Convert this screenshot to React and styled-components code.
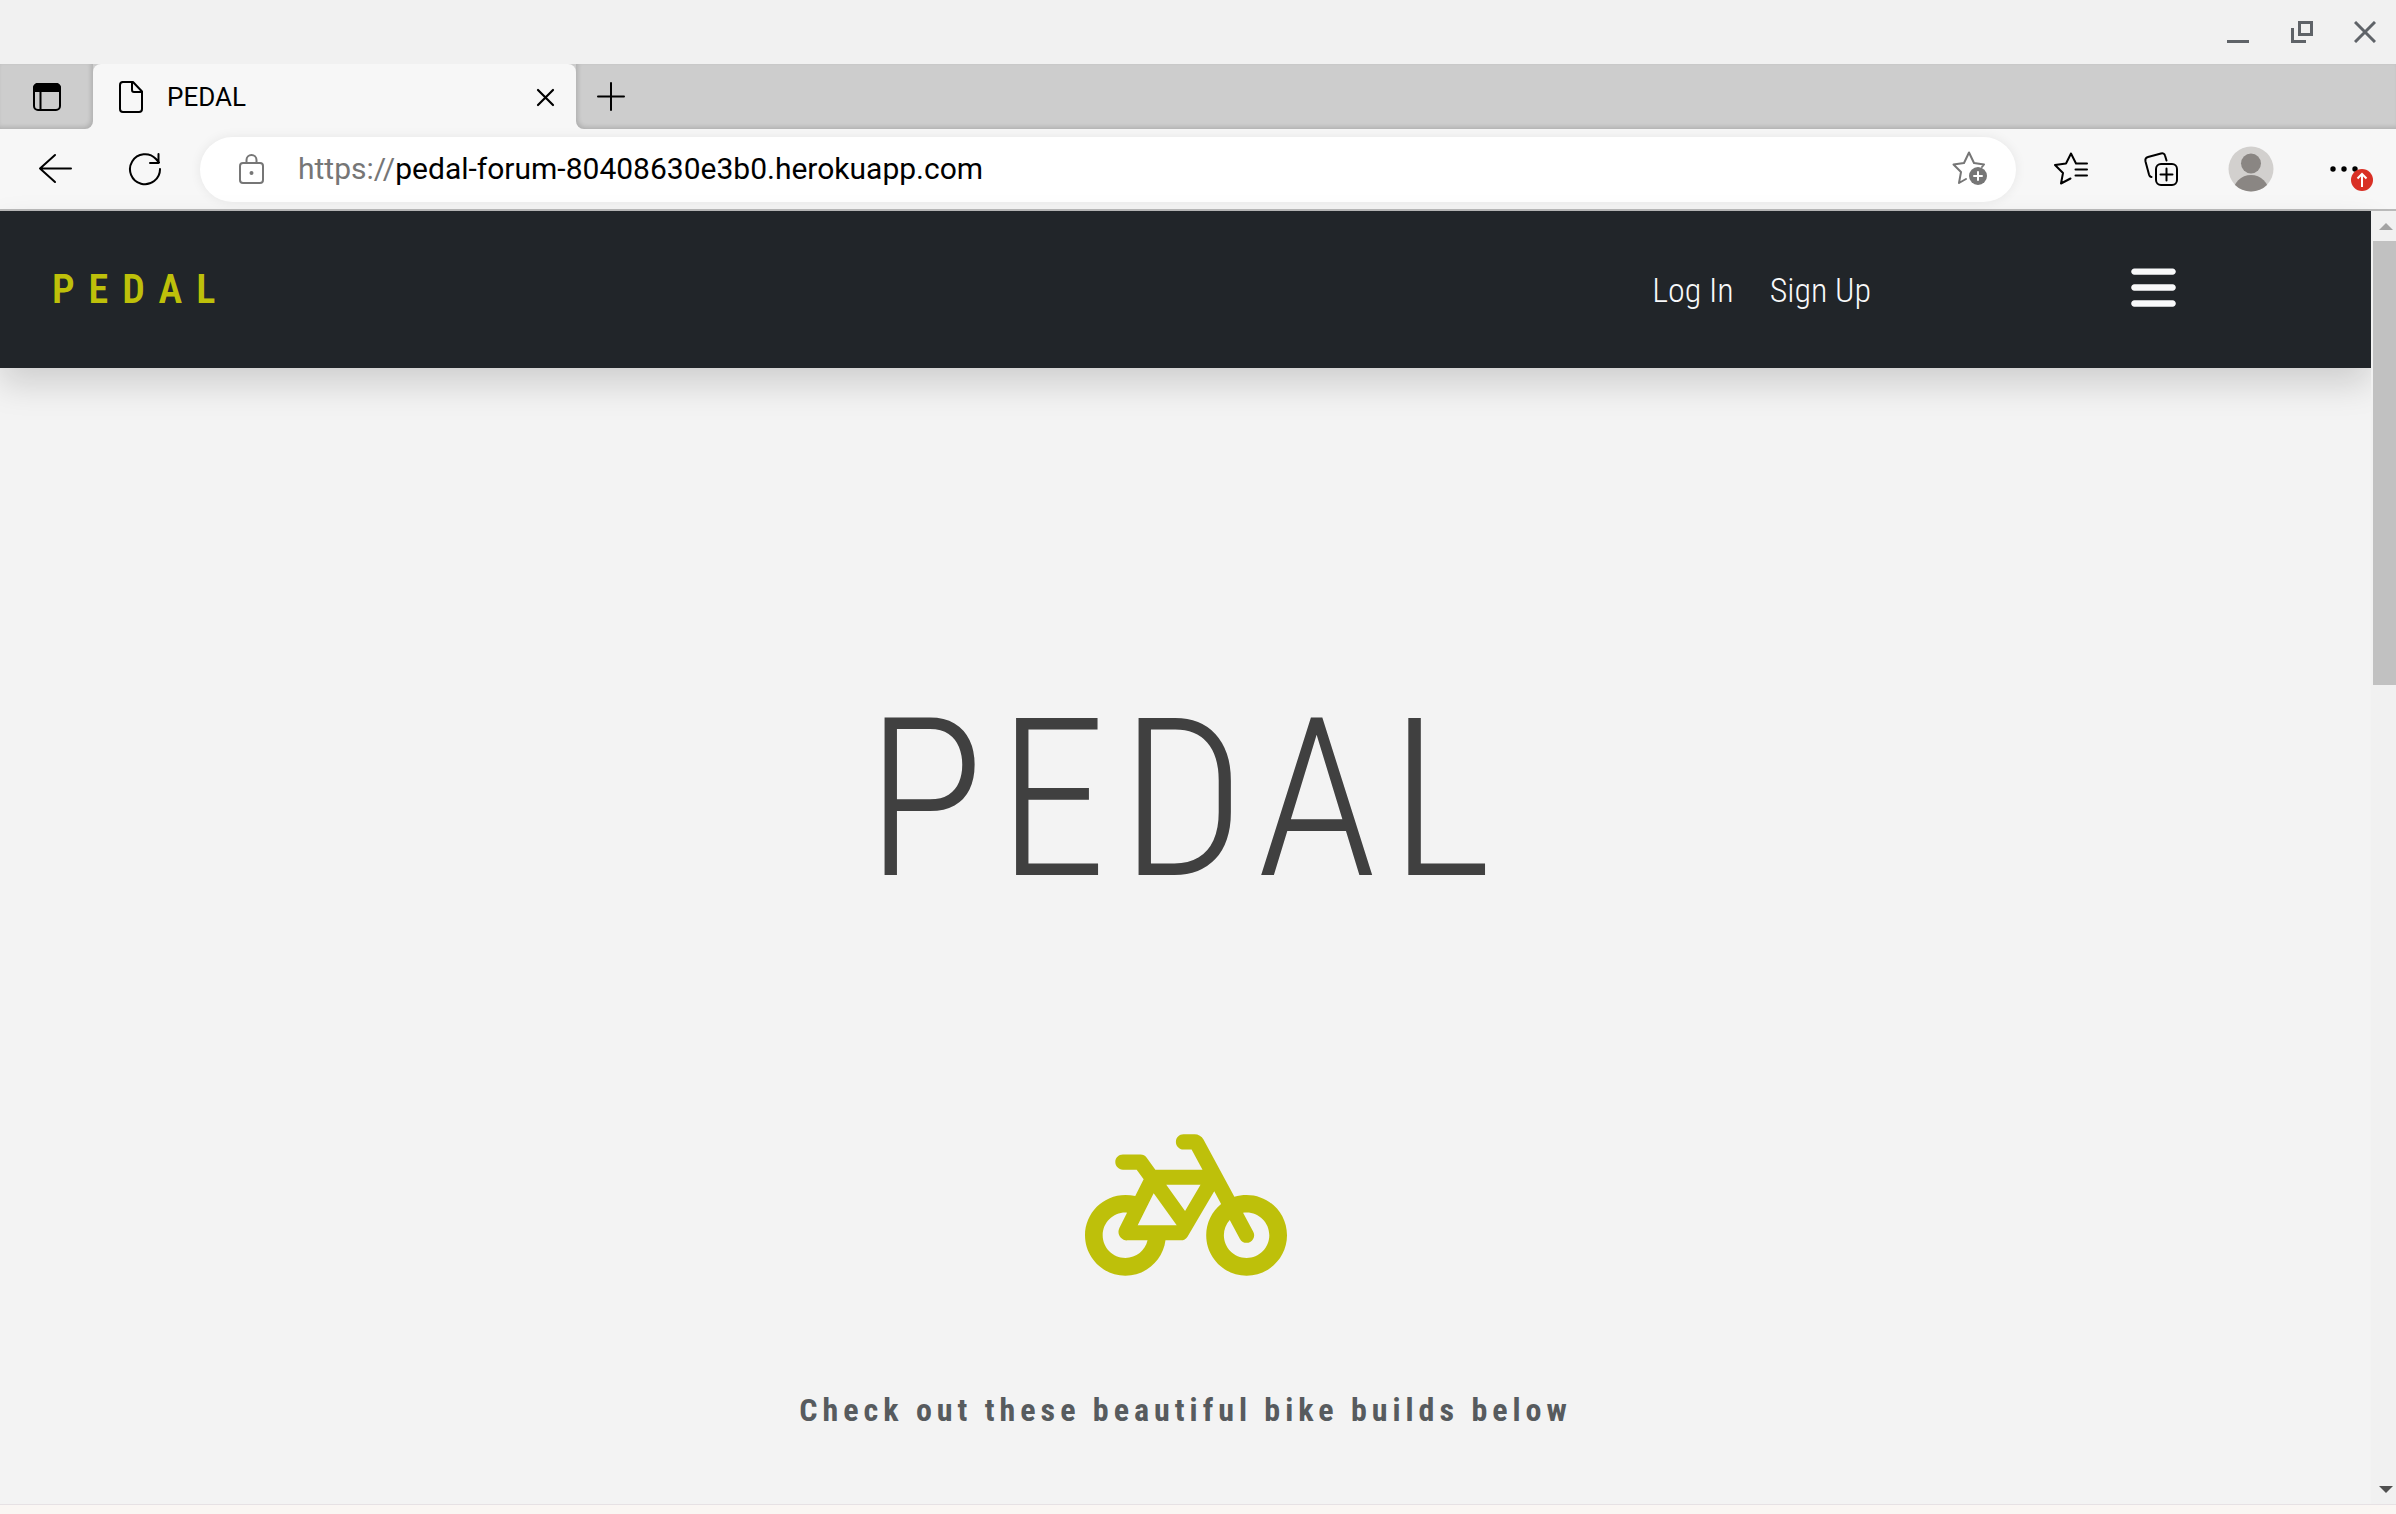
import React from "react";
import styled, { createGlobalStyle } from "styled-components";
import { FaBars, FaBicycle } from "react-icons/fa6";

const display = `"Roboto Condensed", "Liberation Sans Narrow", "Liberation Sans", sans-serif`;

const GlobalStyle = createGlobalStyle`
  *, *::before, *::after { box-sizing: border-box; }
  body { margin: 0; font-family: Roboto, sans-serif; background: #f3f3f3; color: #000; }
  button { margin: 0; padding: 0; border: 0; background: none; color: inherit; font: inherit; }
  a { color: inherit; text-decoration: none; }
  svg { display: block; }
`;

const Window = styled.div`
  display: flex;
  flex-direction: column;
  height: 100vh;
  overflow: hidden;
`;

const TitleBar = styled.header`
  display: flex;
  justify-content: flex-end;
  flex: none;
  height: 64px;
  background: #f1f1f1;
  color: #5f6368;
`;

const WindowButton = styled.button`
  display: grid;
  place-items: center;
  width: 64px;
  height: 64px;
  &:last-child { width: 62px; }
`;

const TabStrip = styled.div`
  display: flex;
  flex: none;
  height: 65px;
  background: linear-gradient(#cdcdcd 50%, #f7f7f7 50%);
`;

const TabSide = styled.div`
  display: flex;
  align-items: center;
  justify-content: ${(p) => (p.$end ? "flex-start" : "center")};
  flex: ${(p) => (p.$end ? "1" : "0 0 93px")};
  padding-left: ${(p) => (p.$end ? "20px" : "0")};
  background: #cdcdcd;
  border-radius: ${(p) => (p.$end ? "0 0 0 8px" : "0 0 8px 0")};
  box-shadow: inset ${(p) => (p.$end ? "2px" : "-2px")} -2px 4px rgba(0, 0, 0, 0.14);
`;

const Tab = styled.div`
  display: flex;
  align-items: center;
  gap: 22px;
  width: 483px;
  padding: 0 20px 0 24px;
  background: #f7f7f7;
  border-radius: 8px 8px 0 0;
  font-size: 26px;
  line-height: 32px;
`;

const TabTitle = styled.span`
  flex: 1;
`;

const Toolbar = styled.div`
  display: flex;
  align-items: center;
  flex: none;
  height: 82px;
  padding: 0 4px 0 10px;
  background: #f7f7f7;
  border-bottom: 2px solid #bababa;
`;

const IconButton = styled.button`
  position: relative;
  display: grid;
  place-items: center;
  width: ${(p) => p.$width || 90}px;
  height: 64px;
`;

const AddressBar = styled.form`
  display: flex;
  align-items: center;
  flex: 1;
  height: 65px;
  margin: 0 10px;
  padding: 0 28px 0 38px;
  background: #fff;
  border-radius: 33px;
  box-shadow: 0 0 12px rgba(0, 0, 0, 0.07);
  font-size: 30px;
  line-height: 40px;
`;

const Scheme = styled.label`
  margin-left: 32px;
  color: #767676;
`;

const AddressInput = styled.input`
  flex: 1;
  min-width: 0;
  height: 40px;
  padding: 0;
  border: 0;
  outline: 0;
  background: none;
  color: #000;
  font: inherit;
`;

const UpdateBadge = styled.span`
  position: absolute;
  right: 19px;
  bottom: 10px;
`;

const Viewport = styled.div`
  display: flex;
  flex: 1;
  min-height: 0;
`;

const Page = styled.div`
  flex: 1;
  min-width: 0;
  background: #f3f3f3;
`;

const Navbar = styled.nav`
  display: flex;
  align-items: center;
  height: 157px;
  padding: 0 192px 0 52px;
  background: #212529;
  color: #f8f9fa;
  box-shadow: 0 16px 32px rgba(0, 0, 0, 0.15);
`;

const Brand = styled.a`
  margin-right: auto;
  color: #bec00a;
  font: 600 40px/48px ${display};
  letter-spacing: 14px;
`;

const NavLinks = styled.div`
  display: flex;
  gap: 36px;
  margin-right: 257px;
  font: 300 34px/44px ${display};
`;

const MenuButton = styled.button`
  padding-bottom: 4px;
`;

const Hero = styled.main`
  display: flex;
  flex-direction: column;
  align-items: center;
  padding-top: 312px;
`;

const HeroTitle = styled.h1`
  margin: 0;
  color: #404040;
  font: 300 220px/240px ${display};
  letter-spacing: 13px;
`;

const BikeMark = styled.div`
  margin: 184px 0 84px;
  color: #bec00a;
`;

const Tagline = styled.p`
  margin: 0;
  color: #575b5e;
  font: 700 32px/40px ${display};
  letter-spacing: 5px;
`;

const Scrollbar = styled.div`
  display: flex;
  flex-direction: column;
  flex: none;
  width: 25px;
  padding-left: 2px;
  background: #f1f1f1;
`;

const ScrollButton = styled.button`
  display: grid;
  place-items: center;
  flex: none;
  height: 30px;
  padding-left: 2px;
  color: ${(p) => (p.$idle ? "#a3a3a3" : "#505050")};
`;

const Track = styled.div`
  flex: 1;
`;

const Thumb = styled.div`
  height: 36%;
  background: #c1c1c1;
`;

const WindowEdge = styled.footer`
  flex: none;
  height: 10px;
  border-top: 1px solid #e6e1e4;
  background: #faf6f3;
`;

const Glyph = ({ w, h, sw = 2, children }) => (
  <svg width={w} height={h} viewBox={`0 0 ${w} ${h}`} fill="none" stroke="currentColor"
    strokeWidth={sw} strokeLinecap="round" strokeLinejoin="round" aria-hidden="true">
    {children}
  </svg>
);

export default function App() {
  return (
    <Window>
      <GlobalStyle />
      <TitleBar>
        <WindowButton aria-label="Minimize">
          <svg width="22" height="22"><path d="M0 19h22v3H0z" fill="currentColor" /></svg>
        </WindowButton>
        <WindowButton aria-label="Restore">
          <svg width="22" height="22" fill="none" stroke="currentColor" strokeWidth="3">
            <path d="M8.500 1.500h12v12h-12z M1.500 7v13.500H15" />
          </svg>
        </WindowButton>
        <WindowButton aria-label="Close window">
          <svg width="22" height="22" fill="none" stroke="currentColor" strokeWidth="3">
            <path d="M1 1l20 20M21 1L1 21" />
          </svg>
        </WindowButton>
      </TitleBar>

      <TabStrip>
        <TabSide>
          <button aria-label="Tab actions">
            <Glyph w={30} h={30}>
              <rect x="2" y="2" width="26" height="26" rx="4" />
              <path d="M2 9V6a4 4 0 0 1 4-4h18a4 4 0 0 1 4 4v3z" fill="currentColor" />
              <path d="M8.500 9v19" />
            </Glyph>
          </button>
        </TabSide>
        <Tab>
          <Glyph w={28} h={34}>
            <path d="M5 2h11l9 9.500V29a3 3 0 0 1-3 3H6a3 3 0 0 1-3-3V5a3 3 0 0 1 3-3z" />
            <path d="M15 2v8a2 2 0 0 0 2 2h8" />
          </Glyph>
          <TabTitle>PEDAL</TabTitle>
          <button aria-label="Close tab">
            <Glyph w={22} h={22} sw={2.2}><path d="M4 4l15 15M19 4L4 19" /></Glyph>
          </button>
        </Tab>
        <TabSide $end>
          <button aria-label="New tab">
            <Glyph w={30} h={32}><path d="M15 2v27M2 15.500h26" /></Glyph>
          </button>
        </TabSide>
      </TabStrip>

      <Toolbar>
        <IconButton aria-label="Back">
          <Glyph w={34} h={32}><path d="M17 2L2 15.500 17 29M2 15.500h31" /></Glyph>
        </IconButton>
        <IconButton aria-label="Reload">
          <Glyph w={34} h={34}>
            <path d="M32 17a15 15 0 1 1-4-10l3 3.500M30.500 2v9H22" />
          </Glyph>
        </IconButton>
        <AddressBar onSubmit={(e) => e.preventDefault()}>
          <Glyph w={28} h={32}>
            <g stroke="#767676">
              <rect x="2" y="10" width="23" height="20" rx="3" />
              <path d="M8.500 10V7a5 5 0 0 1 10 0v3" />
              <circle cx="13.500" cy="20" r="1" fill="#767676" />
            </g>
          </Glyph>
          <Scheme htmlFor="address">https://</Scheme>
          <AddressInput id="address" spellCheck={false} defaultValue="pedal-forum-80408630e3b0.herokuapp.com" />
          <button type="button" aria-label="Add to favorites">
            <Glyph w={36} h={36}>
              <g stroke="#767676">
                <path d="M7 32l2-11L1.500 13.500 12 12l5-10.500L22 12l10 1.500-2 2.500M7 32l7-4" />
                <circle cx="26" cy="25" r="9" fill="#767676" stroke="none" />
                <path d="M26 21v8M22 25h8" stroke="#fff" />
              </g>
            </Glyph>
          </button>
        </AddressBar>
        <IconButton aria-label="Favorites">
          <Glyph w={36} h={34}>
            <path d="M34 11.500H23l-5-10-5 10-11 1.500 8 8L8 31.500l9.500-5M22.500 17.500H34M22.500 23.500H34" />
          </Glyph>
        </IconButton>
        <IconButton aria-label="Collections">
          <Glyph w={36} h={36}>
            <rect x="13" y="13" width="21" height="21" rx="5" />
            <path d="M23.500 17.500v12M17.500 23.500h12M8.500 26C7 26 6.500 25 6 23.500L2.500 10.500C2 8 3 6.500 5 6l13-3.500c2-.5 3.500 0 4 2L23.500 9.500" />
          </Glyph>
        </IconButton>
        <IconButton aria-label="Profile">
          <svg width="46" height="46" viewBox="0 0 46 46">
            <clipPath id="avatar"><circle cx="23" cy="23" r="22.500" /></clipPath>
            <g clipPath="url(#avatar)">
              <path d="M0 0h46v46H0z" fill="#d2d0ce" />
              <circle cx="23" cy="17.500" r="10" fill="#8a8683" />
              <circle cx="23" cy="47" r="18" fill="#8a8683" />
            </g>
          </svg>
        </IconButton>
        <IconButton aria-label="Settings and more" $width={96}>
          <svg width="30" height="8" fill="currentColor">
            <circle cx="4" cy="4" r="2.700" /><circle cx="15" cy="4" r="2.700" /><circle cx="26" cy="4" r="2.700" />
          </svg>
          <UpdateBadge>
            <svg width="22" height="22" fill="none" stroke="#fff" strokeWidth="2">
              <circle cx="11" cy="11" r="11" fill="#d93025" stroke="none" />
              <path d="M11 18V5M6.500 9.500L11 5l4.500 4.500" />
            </svg>
          </UpdateBadge>
        </IconButton>
      </Toolbar>

      <Viewport>
        <Page>
          <Navbar>
            <Brand href="#">PEDAL</Brand>
            <NavLinks>
              <a href="#login">Log In</a>
              <a href="#signup">Sign Up</a>
            </NavLinks>
            <MenuButton aria-label="Menu"><FaBars size={51} /></MenuButton>
          </Navbar>
          <Hero>
            <HeroTitle>PEDAL</HeroTitle>
            <BikeMark><FaBicycle size={202} /></BikeMark>
            <Tagline>Check out these beautiful bike builds below</Tagline>
          </Hero>
        </Page>
        <Scrollbar>
          <ScrollButton $idle aria-label="Scroll up">
            <svg width="14" height="7" fill="currentColor"><path d="M7 0l7 7H0z" /></svg>
          </ScrollButton>
          <Track><Thumb /></Track>
          <ScrollButton aria-label="Scroll down">
            <svg width="14" height="7" fill="currentColor"><path d="M0 0h14L7 7z" /></svg>
          </ScrollButton>
        </Scrollbar>
      </Viewport>
      <WindowEdge />
    </Window>
  );
}
